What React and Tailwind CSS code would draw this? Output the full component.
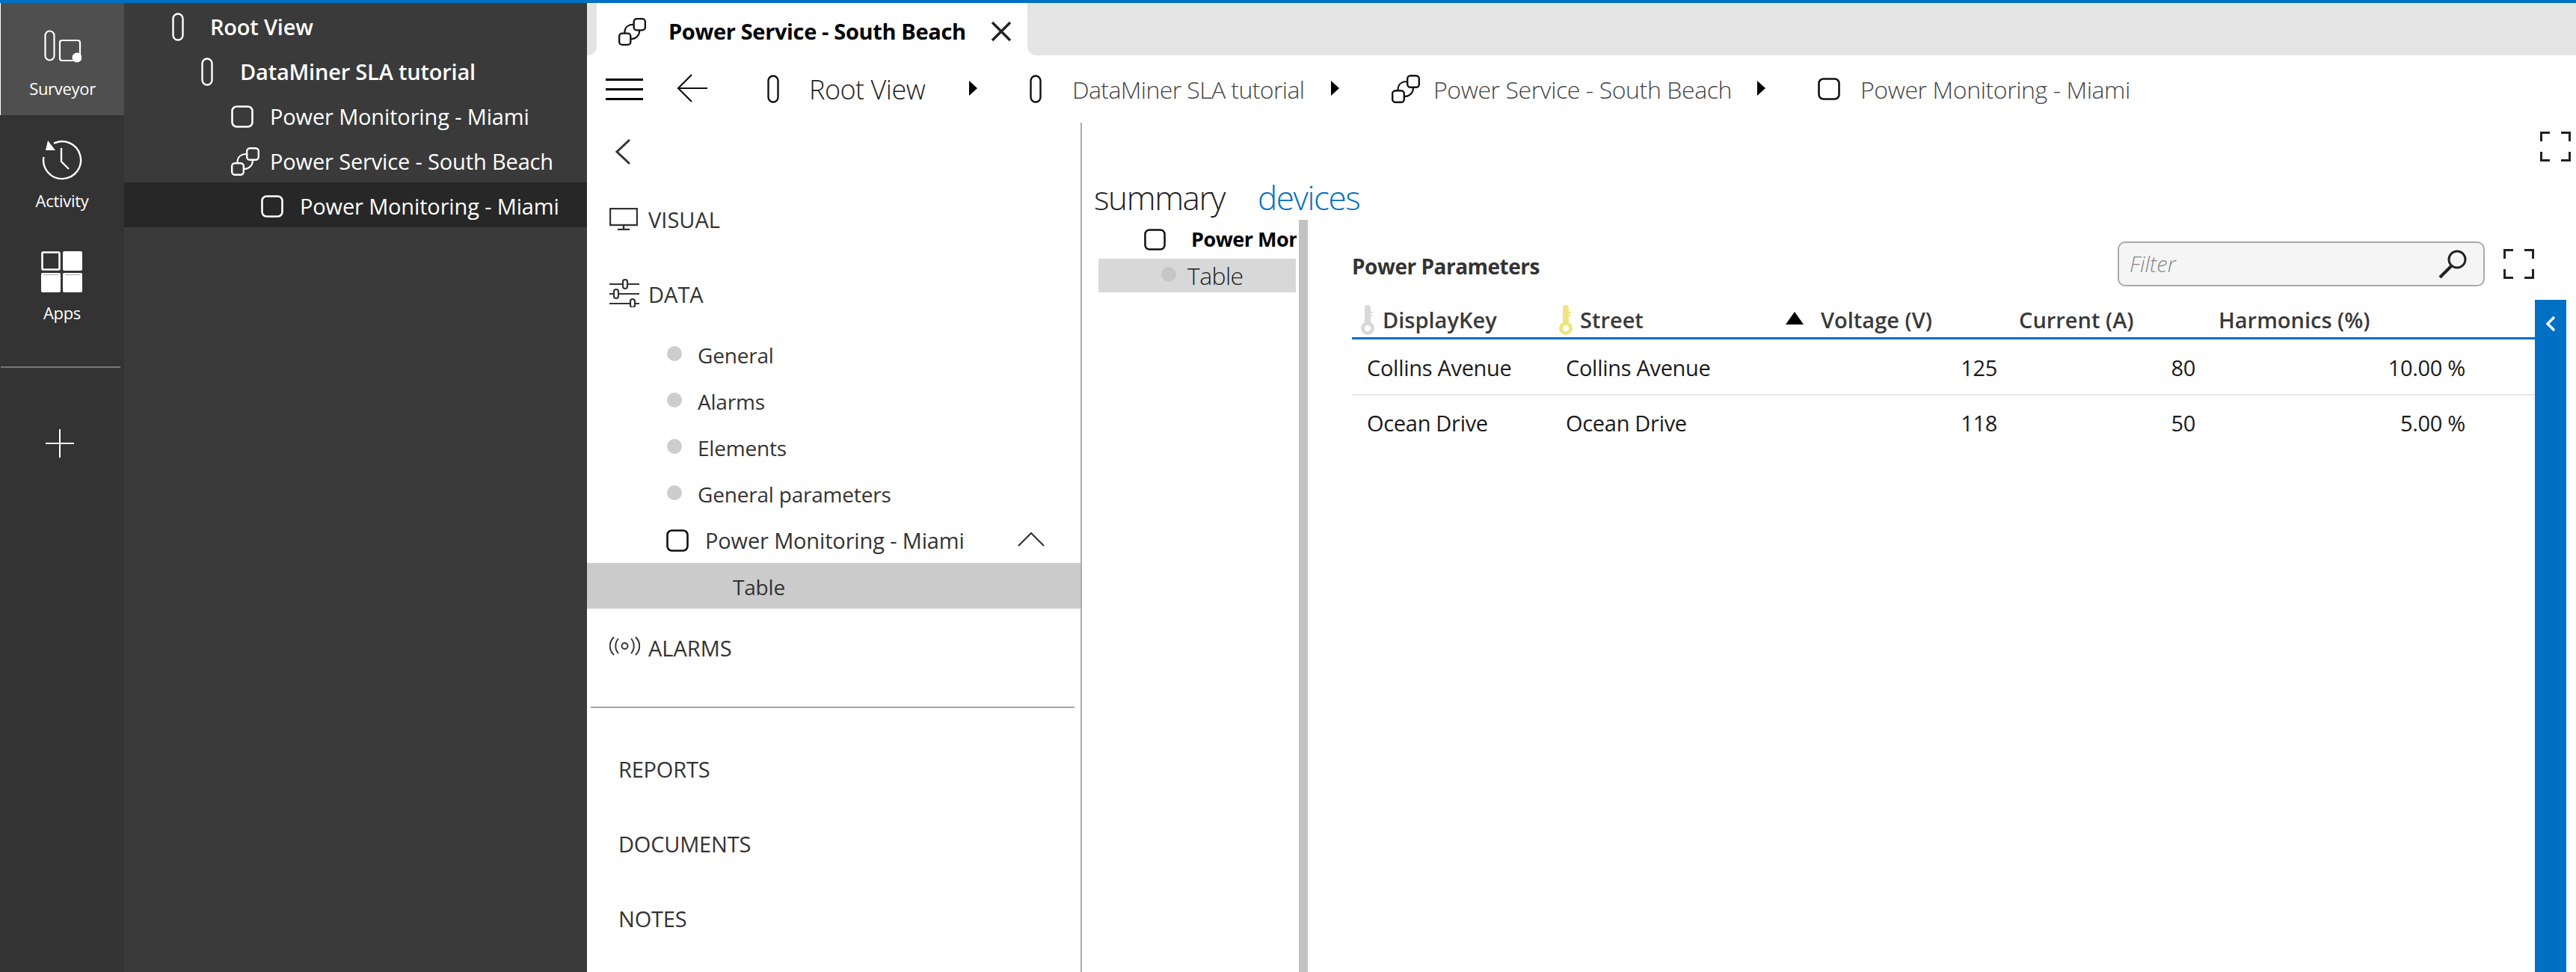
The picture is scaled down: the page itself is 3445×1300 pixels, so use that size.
import React from 'react';

const Pill = ({ c = 'currentColor', w = 16, h = 38 }) => (
  <svg width={w} height={h} viewBox="0 0 16 38" fill="none" className="shrink-0"><rect x="1.5" y="1.5" width="13" height="35" rx="6.5" stroke={c} strokeWidth="2.4" /></svg>
);
const Sq = ({ c = 'currentColor', s = 30 }) => (
  <svg width={s} height={s} viewBox="0 0 30 30" fill="none" className="shrink-0"><rect x="1.5" y="1.5" width="27" height="27" rx="6" stroke={c} strokeWidth="2.6" /></svg>
);
const Service = ({ c = 'currentColor', w = 38, h = 38 }) => (
  <svg width={w} height={h} viewBox="0 0 38 38" fill="none" className="shrink-0">
    <rect x="21.2" y="1.2" width="15.6" height="15.6" rx="4" stroke={c} strokeWidth="2.4" />
    <rect x="1.2" y="21.2" width="15.6" height="15.6" rx="4" stroke={c} strokeWidth="2.4" />
    <path d="M20.5 9 C13 9 8.5 13.5 8.5 20.5 M29 17.5 C29 24 24 29 17.5 29" stroke={c} strokeWidth="2.2" />
  </svg>
);
const Tri = () => (
  <svg width="11" height="20" viewBox="0 0 11 20" className="shrink-0 -mt-[3px]"><path d="M0 0 L11 10 L0 20 Z" fill="#000" /></svg>
);
const Full = () => (
  <svg width="41" height="40" viewBox="0 0 41 40" fill="none" stroke="#222" strokeWidth="3" className="shrink-0">
    <path d="M1.5 13V1.5H13 M28 1.5H39.5V13 M1.5 27V38.5H13 M28 38.5H39.5V27" />
  </svg>
);
const Key = ({ c }) => (
  <svg width="18" height="40" viewBox="0 0 18 40" fill="none" className="shrink-0">
    <path d="M5 4 a4 4 0 0 1 8 0 V9 h3 v2 h-3 v2 h2 v2 h-2 V26 H5 Z" fill={c} />
    <circle cx="9" cy="31" r="6.5" stroke={c} strokeWidth="5" />
  </svg>
);
const Dot = ({ c = '#cdcdcd' }) => <span className="w-5 h-5 rounded-full shrink-0 -mt-[4px]" style={{ background: c }} />;

const TreeRow = ({ pad, icon, gap, active, semibold, children }) => (
  <div className={`h-[60px] flex items-center pt-[4px] ${active ? 'bg-[#272727]' : ''}`} style={{ paddingLeft: pad }}>
    <span className="flex items-center" style={{ width: gap }}>{icon}</span>
    <span className={`text-[29px] whitespace-nowrap ${semibold ? 'font-semibold tracking-[-0.2px]' : 'tracking-[-0.15px]'}`}>{children}</span>
  </div>
);

const RailItem = ({ active, icon, label }) => (
  <div className={`h-[150px] flex flex-col items-center pt-[36px] ${active ? 'bg-[#4f4f4f] border-l border-white' : ''}`}>
    <div className="h-[52px] flex items-start justify-center">{icon}</div>
    <div className="text-[22px] leading-[28px] mt-[12px] tracking-[-0.3px]">{label}</div>
  </div>
);

const NavHead = ({ icon, children, cls }) => (
  <div className={`flex items-center pl-[30px] shrink-0 ${cls}`}>
    <span className="w-[52px] flex items-center">{icon}</span>
    <span className="text-[29px] text-[#333]">{children}</span>
  </div>
);
const SubItem = ({ children }) => (
  <div className="h-[62px] flex items-center pl-[107px] text-[28px] tracking-[-0.2px] text-[#333]">
    <Dot />
    <span className="ml-[21px]">{children}</span>
  </div>
);
const Crumb = ({ icon, gap, width, size = 'text-[32px] tracking-[-0.4px] text-[#444]', children }) => (
  <div className="flex items-center shrink-0" style={{ width }}>
    {icon}
    <span className={`whitespace-nowrap font-light pt-[2px] ${size}`} style={{ marginLeft: gap }}>{children}</span>
  </div>
);
const Row = ({ a, b, v, c, h, line }) => (
  <div className={`grid grid-cols-[286px_286px_292px_265px_366px] items-center text-[29px] tracking-[-0.3px] text-[#1a1a1a] ${line ? 'h-[75px] pt-[2px] border-b-2 border-[#e8e8e8]' : 'h-[74px]'}`}>
    <span className="pl-[20px]">{a}</span>
    <span>{b}</span>
    <span className="text-right pr-[1px]">{v}</span>
    <span className="text-right pr-[1px]">{c}</span>
    <span className="text-right pr-[6px]">{h}</span>
  </div>
);

export default function App() {
  return (
    <div className="w-[3445px] h-[1300px] overflow-hidden flex flex-col bg-white font-['Open_Sans','Noto_Sans',sans-serif]">
      <div className="h-1 bg-[#0070c4] shrink-0" />
      <div className="flex flex-1 min-h-0">
        {/* rail */}
        <div className="w-[166px] shrink-0 bg-[#333333] text-white">
          <RailItem active label="Surveyor" icon={
            <svg width="50" height="44" viewBox="0 0 50 44" fill="none">
              <rect x="1.5" y="1.5" width="12" height="39" rx="6" stroke="#fff" strokeWidth="2.2" />
              <rect x="21" y="14" width="27" height="27" rx="3" stroke="#fff" strokeWidth="2.2" />
              <circle cx="44" cy="37" r="6.5" fill="#fff" />
            </svg>} />
          <RailItem label="Activity" icon={
            <svg width="56" height="56" viewBox="0 0 56 56" fill="none" className="-mt-[3px]">
              <path d="M17 4.7 A25 25 0 1 1 3.4 23" stroke="#fff" strokeWidth="2.4" />
              <path d="M9 1 L6 14 L19 14 Z" fill="#fff" />
              <path d="M27 11 V29 L37 39" stroke="#fff" strokeWidth="2.4" />
            </svg>} />
          <RailItem label="Apps" icon={
            <svg width="56" height="56" viewBox="0 0 56 56" fill="none" className="-mt-[4px]">
              <rect x="1.5" y="1.5" width="23" height="23" stroke="#fff" strokeWidth="2.6" rx="1" />
              <rect x="29" y="0" width="26" height="26" rx="2" fill="#fff" />
              <rect x="0" y="29" width="26" height="26" rx="2" fill="#fff" />
              <rect x="29" y="29" width="26" height="26" rx="2" fill="#fff" />
              <path d="M3 31.5H23 M32 31.5H52" stroke="#aaa" />
            </svg>} />
          <div className="h-[2px] bg-[#777] ml-px w-[160px] mt-[36px]" />
          <div className="flex ml-[61px] mt-[82px]">
            <svg width="38" height="38" viewBox="0 0 38 38" stroke="#fff" strokeWidth="2"><path d="M19 0V38M0 19H38" /></svg>
          </div>
        </div>
        {/* tree */}
        <div className="w-[619px] shrink-0 bg-[#3a3a3a] text-white">
          <TreeRow semibold pad={64} gap={51} icon={<Pill c="#fff" />}>Root View</TreeRow>
          <TreeRow semibold pad={103} gap={52} icon={<Pill c="#fff" />}>DataMiner SLA tutorial</TreeRow>
          <TreeRow pad={143} gap={52} icon={<Sq c="#fff" />}>Power Monitoring - Miami</TreeRow>
          <TreeRow pad={143} gap={52} icon={<Service c="#fff" />}>Power Service - South Beach</TreeRow>
          <TreeRow active pad={183} gap={52} icon={<Sq c="#fff" />}>Power Monitoring - Miami</TreeRow>
        </div>
        {/* right */}
        <div className="flex-1 min-w-0 flex flex-col">
          <div className="h-[70px] shrink-0 flex bg-white">
            <div className="w-[13px] h-full bg-[#e4e4e4] rounded-br-[12px]" />
            <div className="w-[576px] h-full bg-white rounded-t-[14px] flex items-center pl-[29px] pt-[6px]">
              <Service c="#111" w={37} h={37} />
              <span className="ml-[30px] text-[29px] font-bold tracking-[-0.35px] text-black whitespace-nowrap">Power Service - South Beach</span>
              <svg width="28" height="28" viewBox="0 0 28 28" stroke="#222" strokeWidth="3.4" className="ml-[33px] shrink-0"><path d="M2 2L26 26M26 2L2 26" /></svg>
            </div>
            <div className="flex-1 h-full bg-[#e4e4e4] rounded-bl-[12px]" />
          </div>
          <div className="h-[90px] shrink-0 flex items-center pl-[25px]">
            <div className="w-[50px] flex flex-col gap-[10px] shrink-0">
              <div className="h-[3px] bg-black" /><div className="h-[3px] bg-black" /><div className="h-[3px] bg-black" />
            </div>
            <svg width="42" height="38" viewBox="0 0 42 38" fill="none" stroke="#111" strokeWidth="2.2" className="ml-[45px] -mt-[3px] mr-[79px] shrink-0"><path d="M41 19H2M20 1L2 19L20 37" /></svg>
            <Crumb width={270} gap={40} size="text-[36px] tracking-[-0.5px] text-[#222]" icon={<Pill c="#111" />}>Root View</Crumb>
            <Tri />
            <div className="w-[70px] shrink-0" />
            <Crumb width={403} gap={41} size="text-[32px] tracking-[-0.6px] text-[#444]" icon={<Pill c="#111" />}>DataMiner SLA tutorial</Crumb>
            <Tri />
            <div className="w-[70px] shrink-0" />
            <Crumb width={489} gap={18} icon={<Service c="#111" />}>Power Service - South Beach</Crumb>
            <Tri />
            <div className="w-[70px] shrink-0" />
            <Crumb width={440} gap={27} icon={<Sq c="#111" />}>Power Monitoring - Miami</Crumb>
          </div>
          <div className="flex-1 min-h-0 flex">
            {/* nav */}
            <div className="w-[662px] shrink-0 border-r-2 border-[#ababab] flex flex-col">
              <div className="h-[78px] flex items-center pl-[37px] shrink-0">
                <svg width="22" height="36" viewBox="0 0 22 36" fill="none" stroke="#333" strokeWidth="3"><path d="M20 2L3 18L20 34" /></svg>
              </div>
              <NavHead cls="h-[104px]" icon={
                <svg width="38" height="30" viewBox="0 0 38 30" fill="none" stroke="#333" strokeWidth="2.4" className="-mt-[3px]"><rect x="1" y="1" width="36" height="22" /><path d="M19 24V28M11 29H27" /></svg>}>VISUAL</NavHead>
              <NavHead cls="h-[96px]" icon={
                <svg width="40" height="38" viewBox="0 0 40 38" fill="none" stroke="#333" strokeWidth="2.2" className="-mt-[4px]">
                  <path d="M0 7H40M0 20H40M0 33H40" /><rect x="18" y="1" width="6" height="12" rx="3" fill="#fff" /><rect x="6" y="14" width="6" height="12" rx="3" fill="#fff" /><rect x="28" y="27" width="6" height="11" rx="3" fill="#fff" />
                </svg>}>DATA</NavHead>
              <div className="pt-[2px]">
                <SubItem>General</SubItem>
                <SubItem>Alarms</SubItem>
                <SubItem>Elements</SubItem>
                <SubItem>General parameters</SubItem>
                <div className="h-[61px] flex items-center pl-[106px] text-[29px] tracking-[-0.15px] text-[#333]">
                  <Sq c="#111" />
                  <span className="ml-[22px] whitespace-nowrap">Power Monitoring - Miami</span>
                  <svg width="36" height="20" viewBox="0 0 36 20" fill="none" stroke="#333" strokeWidth="2.2" className="ml-[71px] -mt-[4px] shrink-0"><path d="M1 19L18 2L35 19" /></svg>
                </div>
                <div className="h-[61px] bg-[#cbcbcb] flex items-center pl-[195px] pt-[2px] text-[28px] tracking-[-0.2px] text-[#333]">Table</div>
              </div>
              <NavHead cls="h-[106px]" icon={
                <svg width="41" height="26" viewBox="0 0 41 26" fill="none" stroke="#333" strokeWidth="1.9" className="-mt-[6px]">
                  <circle cx="20.5" cy="13" r="4" /><path d="M12 3C7 9 7 17 12 23M29 3C34 9 34 17 29 23M6 1C-1 8 -1 18 6 25M35 1C42 8 42 18 35 25" />
                </svg>}>ALARMS</NavHead>
              <div className="h-[2px] bg-[#a6a6a6] ml-[5px] mr-[8px] mt-[25px] shrink-0" />
              <div className="pl-[42px] text-[29px] tracking-[-0.2px] text-[#333] pt-[32px] flex flex-col">
                <div className="h-[100px] flex items-center">REPORTS</div>
                <div className="h-[100px] flex items-center">DOCUMENTS</div>
                <div className="h-[100px] flex items-center">NOTES</div>
              </div>
            </div>
            {/* content */}
            <div className="flex-1 min-w-0 relative flex flex-col">
              <div className="absolute right-[7px] top-[12px]"><Full /></div>
              <div className="h-[130px] shrink-0 flex items-end pl-[16px] gap-[44px] text-[44px] leading-[60px] font-light tracking-[-1.4px] text-[#222]">
                <span>summary</span><span className="text-[#0070c4]">devices</span>
              </div>
              <div className="flex-1 min-h-0 flex">
                <div className="w-[302px] shrink-0 pl-[22px] border-r-[12px] border-[#c2c2c2]">
                  <div className="h-[52px] flex items-center pl-[61px] overflow-hidden w-[265px]">
                    <Sq c="#111" s={29} />
                    <span className="ml-[34px] text-[27px] font-bold tracking-[-0.5px] text-black whitespace-nowrap">Power Monitoring - Miami</span>
                  </div>
                  <div className="h-[45px] w-[264px] bg-[#d8d8d8] flex items-center pl-[84px] text-[32px] font-light tracking-[-0.6px] text-[#222]">
                    <Dot c="#c6c6c6" /><span className="ml-[15px]">Table</span>
                  </div>
                </div>
                <div className="flex-1 min-w-0 pl-[59px] flex flex-col">
                  <div className="h-[107px] shrink-0 flex items-center pr-[56px]">
                    <span className="text-[28px] font-bold tracking-[-0.5px] text-[#333] mt-[16px]">Power Parameters</span>
                    <div className="ml-auto w-[491px] h-[60px] rounded-[10px] border-2 border-[#aaa] bg-[#f5f5f5] flex items-center pl-[14px] pr-[20px] mt-[11px]">
                      <span className="text-[29px] italic font-light text-[#888]">Filter</span>
                      <svg width="40" height="40" viewBox="0 0 40 40" fill="none" stroke="#222" strokeWidth="3" className="ml-auto"><circle cx="25" cy="14" r="11" /><path d="M17 23L2 38" strokeWidth="4" /></svg>
                    </div>
                    <div className="ml-[25px] mt-[11px]"><Full /></div>
                  </div>
                  <div className="flex-1 min-h-0 flex">
                    <div className="w-[1582px] shrink-0">
                      <div className="h-[53px] pt-[3px] border-b-[3px] border-[#0070c4] grid grid-cols-[286px_286px_292px_265px_355px] items-center text-[29px] font-semibold text-[#3a3a3a]">
                        <span className="flex items-center pl-[12px] gap-[11px]"><Key c="#d8d8d8" />DisplayKey</span>
                        <span className="flex items-center -ml-[9px] gap-[10px]"><Key c="#efe47f" />Street</span>
                        <span className="flex items-center ml-[8px]"><span className="w-0 h-0 border-l-[12px] border-r-[12px] border-b-[17px] border-l-transparent border-r-transparent border-b-black -mt-[4px]" /><span className="ml-[23px]">Voltage (V)</span></span>
                        <span className="pl-[28px]">Current (A)</span>
                        <span className="pl-[30px]">Harmonics (%)</span>
                      </div>
                      <Row line a="Collins Avenue" b="Collins Avenue" v="125" c="80" h="10.00 %" />
                      <Row a="Ocean Drive" b="Ocean Drive" v="118" c="50" h="5.00 %" />
                    </div>
                    <div className="w-[42px] shrink-0 bg-[#0070c4] flex justify-center pt-[21px]">
                      <svg width="14" height="22" viewBox="0 0 14 22" fill="none" stroke="#fff" strokeWidth="3.4"><path d="M12 2L3 11L12 20" /></svg>
                    </div>
                  </div>
                </div>
              </div>
            </div>
          </div>
        </div>
      </div>
    </div>
  );
}
